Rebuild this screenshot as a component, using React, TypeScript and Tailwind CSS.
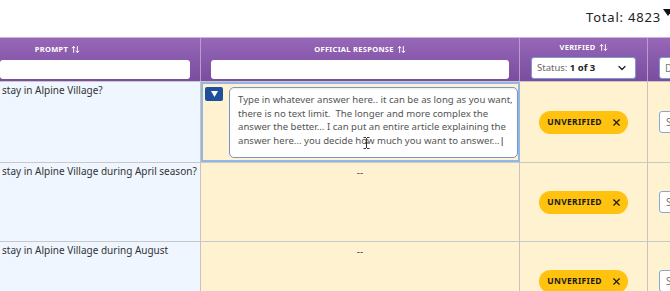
import { ArrowUpDown, ChevronDown, X } from "lucide-react";

const font = { fontFamily: "'Noto Sans', 'Open Sans', sans-serif" };

function SortLabel({ label }: { label: string }) {
  return (
    <div className="flex items-center justify-center gap-[3px] text-[7.5px] font-bold tracking-[0.3px] text-white">
      <span>{label}</span>
      <ArrowUpDown size={9} strokeWidth={2.5} />
    </div>
  );
}

function Badge() {
  return (
    <div className="flex h-[23px] w-[89px] items-center justify-center gap-[9px] rounded-full bg-[#ffc20e] pl-[2px] text-[8.5px] font-bold tracking-[0.3px] text-[#1a1a1a]">
      <span>UNVERIFIED</span>
      <X size={11} strokeWidth={2.5} />
    </div>
  );
}

function SmallSelect() {
  return (
    <div className="ml-[11px] flex h-[22px] w-[40px] items-center rounded-[3px] border border-[#8aa6d4] bg-white pl-[6px] text-[10px] text-[#777]">
      S
    </div>
  );
}

const rows = [
  { prompt: "stay in Alpine Village?", h: "h-[81px]", editing: true },
  { prompt: "stay in Alpine Village during April season?", h: "h-[79px]", editing: false },
  { prompt: "stay in Alpine Village during August", h: "h-[79px]", editing: false },
];

const answer = [
  "Type in whatever answer here.. it can be as long as you want,",
  "there is no text limit.\u00a0 The longer and more complex the",
  "answer the better... I can put an entire article explaining the",
  "answer here... you decide how much you want to answer...",
];

export default function App() {
  return (
    <div className="relative h-[291px] w-[670px] overflow-hidden bg-white" style={font}>
      {/* Top bar */}
      <div className="flex h-[37px] items-center justify-end">
        <span className="mt-[-2px] text-[13px] tracking-[0.8px] text-[#222]">Total: 4823</span>
        <svg width="10" height="7" viewBox="0 0 10 7" className="ml-[2px] mr-[-3px] mt-[-13px] shrink-0">
          <polygon points="0,0 10,0 5,7" fill="#111" />
        </svg>
      </div>

      {/* Table */}
      <div className="ml-[-85px] w-[800px]">
        {/* Header */}
        <div className="flex h-[44px] border-t border-[#c9b3dc] bg-gradient-to-b from-[#9767b8] to-[#7a4d9e]">
          <div className="flex w-[286px] flex-col border-r border-[#b99dd1] pt-[6px]">
            <SortLabel label="PROMPT" />
            <div className="ml-[85px] mr-[10px] mt-[5px] h-[19px] rounded-[3px] bg-white" />
          </div>
          <div className="flex w-[319px] flex-col border-r border-[#b99dd1] pt-[6px]">
            <SortLabel label="OFFICIAL RESPONSE" />
            <div className="mx-[10px] mt-[5px] h-[19px] rounded-[3px] bg-white" />
          </div>
          <div className="flex w-[128px] flex-col border-r border-[#b99dd1] pt-[4px]">
            <SortLabel label="VERIFIED" />
            <div className="mx-[11px] mt-[4px] flex h-[22px] items-center justify-between rounded-[3px] border border-[#7f9bcc] bg-white pl-[5px] pr-[7px] text-[9.5px]">
              <span className="text-[#666]">
                Status: <span className="font-bold text-[#222]">1 of 3</span>
              </span>
              <ChevronDown size={12} strokeWidth={2.5} className="text-[#222]" />
            </div>
          </div>
          <div className="flex flex-1 flex-col pt-[4px]">
            <div className="h-[11px]" />
            <div className="ml-[11px] mt-[4px] flex h-[22px] w-[40px] items-center rounded-[3px] border border-[#7f9bcc] bg-white pl-[5px] text-[10px] text-[#777]">
              D
            </div>
          </div>
        </div>

        {/* Rows */}
        {rows.map((r, i) => (
          <div key={i} className={`flex ${r.h} border-t border-[#c8c8c8] first:border-t-0`}>
            <div className="w-[286px] border-r border-[#c8c4bc] bg-[#eff6ff] pl-[87px] pt-[2px] text-[10px] leading-[13px] text-[#333]">
              {r.prompt}
            </div>
            {r.editing ? (
              <div className="flex w-[319px] gap-[6px] border-2 border-[#94b6e6] bg-[#fff2d0] pl-[2px] pt-[3px] pb-[2px]">
                <div className="flex h-[14px] w-[18px] shrink-0 items-center justify-center rounded-[2px] bg-[#1e4f9c]">
                  <svg width="7" height="6" viewBox="0 0 7 6">
                    <polygon points="0,0 7,0 3.5,6" fill="#fff" />
                  </svg>
                </div>
                <div className="flex-1 rounded-[5px] border border-[#7896cb] bg-white pl-[8px] pt-[5px] text-[9.6px] leading-[13.7px] text-[#555] shadow-[inset_0_1px_2px_rgba(0,0,0,0.08)]">
                  {answer.map((line, j) => (
                    <div key={j} className="whitespace-nowrap">
                      {line}
                      {j === answer.length - 1 && <span className="text-[#222]">|</span>}
                    </div>
                  ))}
                </div>
              </div>
            ) : (
              <div className="w-[319px] border-r border-[#c8c4bc] bg-[#fff2d0] pt-[2px] text-center text-[10px] text-[#555]">
                --
              </div>
            )}
            <div className="flex w-[128px] items-center justify-center border-r border-[#c8c4bc] bg-[#fff2d0]">
              <Badge />
            </div>
            <div className="flex flex-1 items-center bg-[#fff2d0]">
              <SmallSelect />
            </div>
          </div>
        ))}
      </div>

      {/* I-beam mouse cursor */}
      <svg width="7" height="12" viewBox="0 0 7 12" className="absolute left-[363px] top-[137px]">
        <path d="M0.5 0.5h2.5M4 0.5h2.5M3.5 1v10M0.5 11.5h2.5M4 11.5h2.5M2 6h3" stroke="#333" strokeWidth="1" fill="none" />
      </svg>
    </div>
  );
}
